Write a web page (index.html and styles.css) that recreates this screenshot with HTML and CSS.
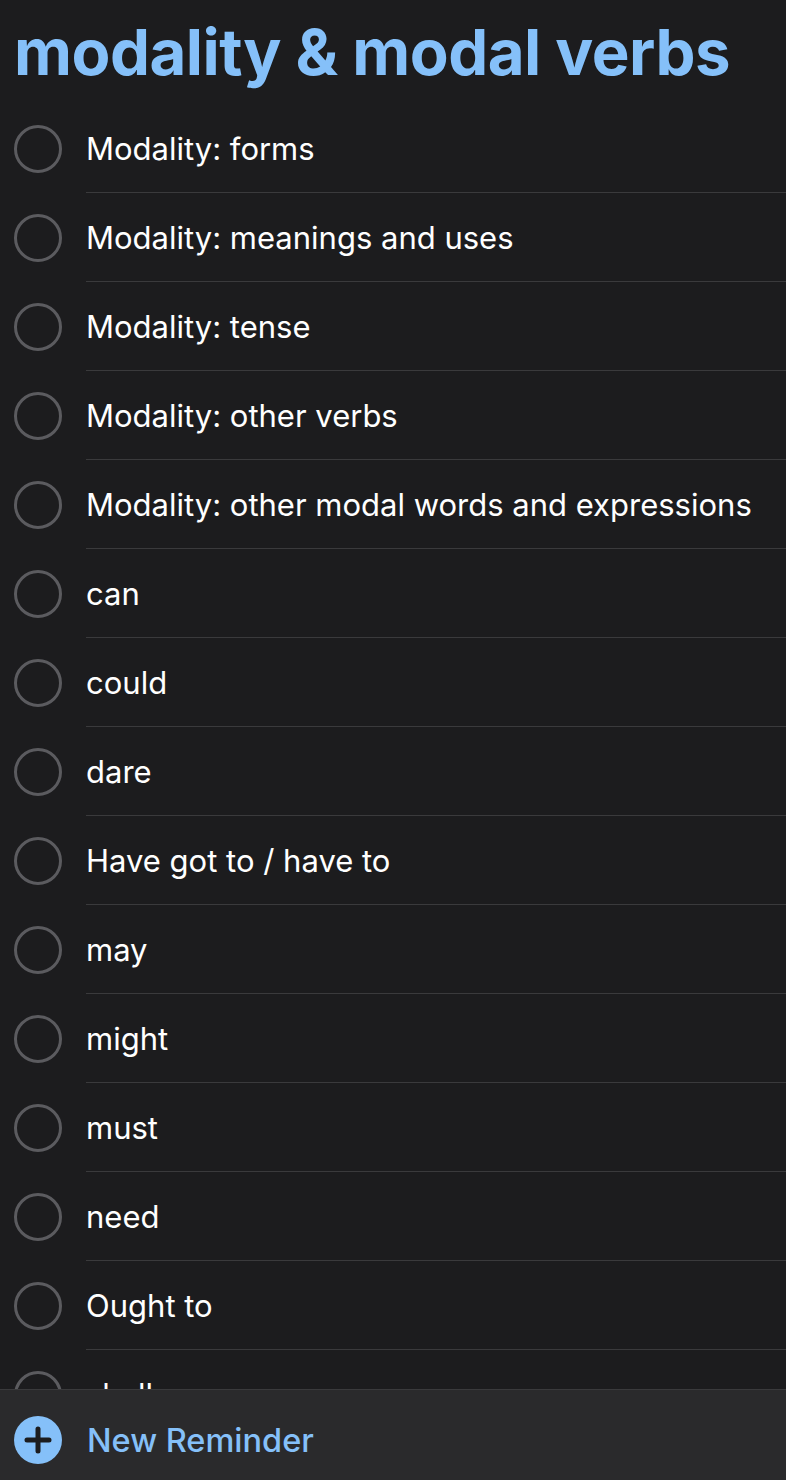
FILE: index.html
```html
<!DOCTYPE html>
<html lang="en">
<head>
    <meta charset="UTF-8">
    <title>modality &amp; modal verbs</title>
    <link rel="stylesheet" href="styles.css">
</head>
<body>
<div class="screen">
    <h1 class="title">modality &amp; modal verbs</h1>

    <ul class="list">
        <li class="item"><span class="check"></span><span class="label">Modality: forms</span></li>
        <li class="item"><span class="check"></span><span class="label">Modality: meanings and uses</span></li>
        <li class="item"><span class="check"></span><span class="label">Modality: tense</span></li>
        <li class="item"><span class="check"></span><span class="label">Modality: other verbs</span></li>
        <li class="item"><span class="check"></span><span class="label">Modality: other modal words and expressions</span></li>
        <li class="item"><span class="check"></span><span class="label">can</span></li>
        <li class="item"><span class="check"></span><span class="label">could</span></li>
        <li class="item"><span class="check"></span><span class="label">dare</span></li>
        <li class="item"><span class="check"></span><span class="label">Have got to / have to</span></li>
        <li class="item"><span class="check"></span><span class="label">may</span></li>
        <li class="item"><span class="check"></span><span class="label">might</span></li>
        <li class="item"><span class="check"></span><span class="label">must</span></li>
        <li class="item"><span class="check"></span><span class="label">need</span></li>
        <li class="item"><span class="check"></span><span class="label">Ought to</span></li>
        <li class="item"><span class="check"></span><span class="label">shall</span></li>
    </ul>

    <div class="toolbar">
        <svg class="add" width="48" height="48" viewBox="0 0 48 48">
            <circle cx="24" cy="24" r="24" fill="#85c0f9"/>
            <path d="M24 13v22M13 24h22" stroke="#1c1c1e" stroke-width="5" stroke-linecap="round"/>
        </svg>
        <span class="add-label">New Reminder</span>
    </div>
</div>
</body>
</html>
```

FILE: styles.css
```css
* {
    margin: 0;
    padding: 0;
    box-sizing: border-box;
}

html, body {
    background: #1c1c1e;
}

body {
    font-family: Inter, "Noto Sans", sans-serif;
    color: #fff;
}

.screen {
    height: 1480px;
    display: flex;
    flex-direction: column;
    overflow: hidden;
}

.title {
    color: #85c0f9;
    font-size: 63.5px;
    font-weight: 700;
    line-height: 104px;
    padding-left: 14px;
    letter-spacing: -0.5px;
    white-space: nowrap;
}

.list {
    list-style: none;
    flex: 1;
    overflow: hidden;
}

.item {
    display: flex;
    align-items: center;
    height: 89px;
    padding-left: 14px;
}

.check {
    flex: none;
    width: 48px;
    height: 48px;
    border: 3px solid #5b5b5f;
    border-radius: 50%;
    margin-right: 24px;
}

.label {
    flex: 1;
    height: 100%;
    display: flex;
    align-items: center;
    font-size: 31px;
    border-bottom: 1px solid #3a3a3c;
    white-space: nowrap;
}

.toolbar {
    flex: none;
    height: 91px;
    background: #2a2a2c;
    border-top: 1px solid #3a3a3c;
    display: flex;
    align-items: center;
    padding-left: 14px;
    padding-top: 10px;
}

.add {
    margin-right: 25px;
}

.add-label {
    color: #85c0f9;
    font-size: 32.5px;
    font-weight: 500;
}
```
